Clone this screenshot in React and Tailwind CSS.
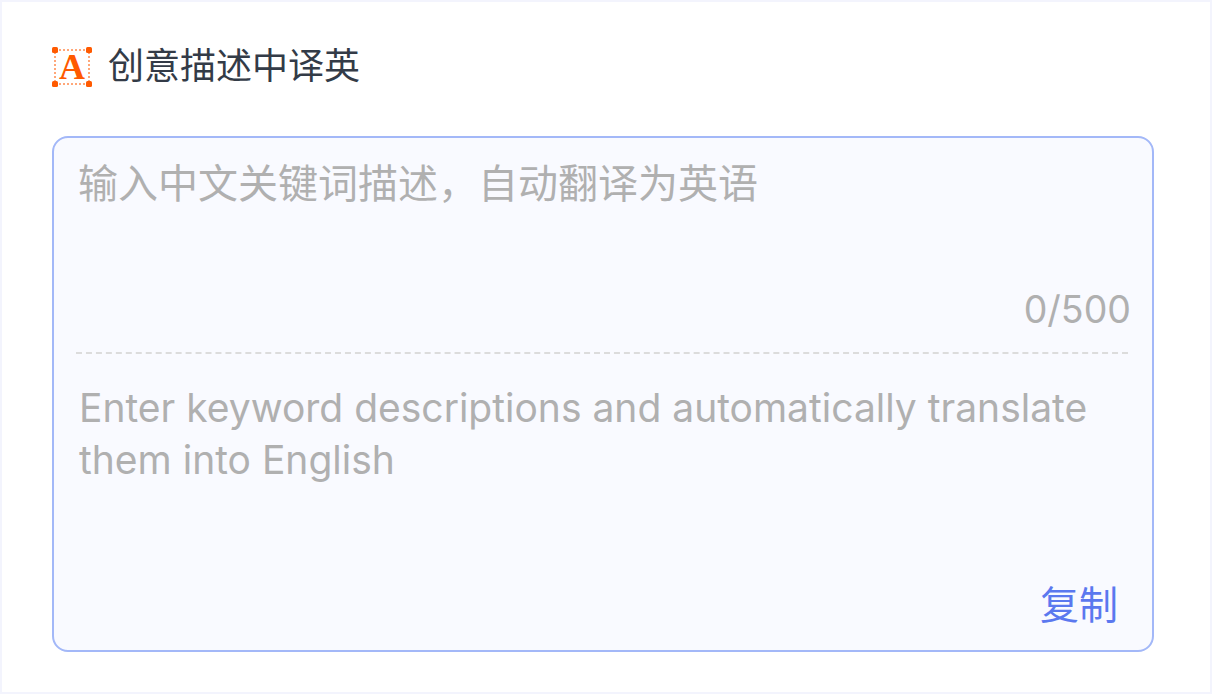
import React from "react";

function Logo() {
  return (
    <svg width="40" height="40" viewBox="0 0 40 40" className="shrink-0">
      <rect x="3" y="3" width="34" height="34" fill="none" stroke="#ff8a4d" strokeWidth="1.5" strokeDasharray="2 2" />
      <rect x="0" y="0" width="6" height="6" rx="1.5" fill="#ff5a00" />
      <rect x="34" y="0" width="6" height="6" rx="1.5" fill="#ff5a00" />
      <rect x="0" y="34" width="6" height="6" rx="1.5" fill="#ff5a00" />
      <rect x="34" y="34" width="6" height="6" rx="1.5" fill="#ff5a00" />
      <text x="20" y="32" textAnchor="middle" fontFamily="'Liberation Serif', serif" fontWeight="700" fontSize="36" fill="#ff5a00">A</text>
    </svg>
  );
}

export default function App() {
  const sans = "font-['Inter','Noto_Sans_CJK_SC',sans-serif]";
  return (
    <div className={`w-[1212px] h-[694px] bg-white border-2 border-[#f3f4fd] px-[50px] pt-[45px] ${sans}`}>
      <div className="flex items-center gap-[16px] h-[40px]">
        <Logo />
        <div className="text-[36px] leading-[38px] pb-[2px] text-[#333b47]">创意描述中译英</div>
      </div>
      <div className="mt-[49px] w-[1102px] h-[516px] rounded-[16px] border-2 border-[#a3b8f8] bg-[#f9faff] flex flex-col">
        <div className="px-[24px] pt-[22px] text-[40px] leading-[48px] text-[#b0b0b0] h-[150px]">输入中文关键词描述，自动翻译为英语</div>
        <div className="text-right pr-[21px] text-[37.5px] leading-[44px] text-[#b0b0b0] h-[44px]">0/500</div>
        <div className="ml-[22px] mr-[24px] mt-[20px] border-t-2 border-dashed border-[#dcdcdc]" />
        <div className="px-[25px] pt-[28px] text-[39px] leading-[52px] text-[#b0b0b0] flex-1">Enter keyword descriptions and automatically translate them into English</div>
        <div className="text-right pr-[34px] pb-[20px] text-[39px] leading-[50px] text-[#5b78ef]">复制</div>
      </div>
    </div>
  );
}
